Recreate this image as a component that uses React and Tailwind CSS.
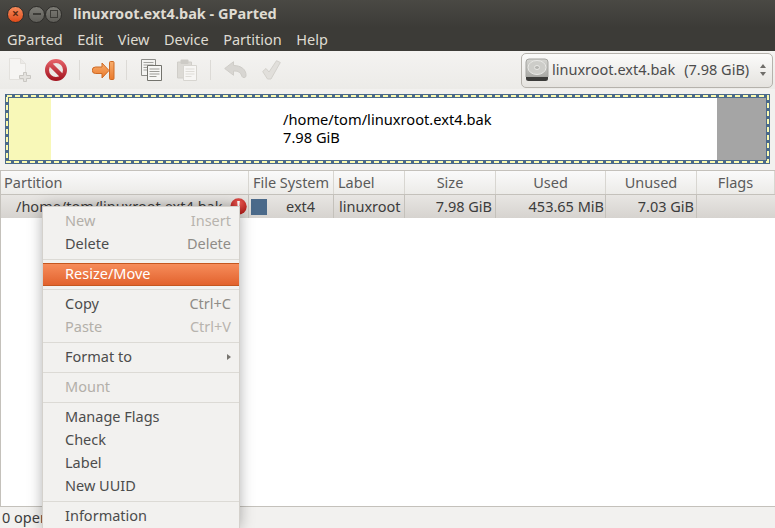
const FONT = "font-['Noto_Sans','Open_Sans',sans-serif]";

const columns = [
  { name: "Partition", className: "w-[248px] pl-[3px] text-left" },
  { name: "File System", className: "w-[85px] text-center" },
  { name: "Label", className: "w-[71px] pl-1 text-left" },
  { name: "Size", className: "w-[91px] text-center" },
  { name: "Used", className: "w-[110px] text-center" },
  { name: "Unused", className: "w-[91px] text-center" },
  { name: "Flags", className: "flex-1 text-center" },
];

const menuItems = [
  { label: "New", accel: "Insert", disabled: true },
  { label: "Delete", accel: "Delete" },
  { sep: true },
  { label: "Resize/Move", active: true },
  { sep: true },
  { label: "Copy", accel: "Ctrl+C" },
  { label: "Paste", accel: "Ctrl+V", disabled: true },
  { sep: true },
  { label: "Format to", submenu: true },
  { sep: true },
  { label: "Mount", disabled: true },
  { sep: true },
  { label: "Manage Flags" },
  { label: "Check" },
  { label: "Label" },
  { label: "New UUID" },
  { sep: true },
  { label: "Information" },
];

const WindowButton = ({ className, children }) => (
  <div className={`flex h-[17px] w-[17px] items-center justify-center rounded-full border border-[#2e2d2a] ${className}`}>
    {children}
  </div>
);

const Slot = ({ className = "w-[36px]", children }) => (
  <div className={`flex h-full items-center justify-center ${className}`}>{children}</div>
);

const Separator = ({ className }) => (
  <div className={`flex h-full items-center justify-center ${className}`}>
    <div className="h-[20px] w-px bg-[#dcdad6]" />
  </div>
);

const NewIcon = () => (
  <svg width="22" height="24" viewBox="0 0 22 24">
    <path d="M0.500 0.500h11l5 5v16h-16z" fill="#f6f5f3" stroke="#e3e1dd" />
    <path d="M11.500 0.500v5h5" fill="#eceae7" stroke="#e3e1dd" />
    <path d="M14.500 14.500h3v3h4v3h-4v3h-3v-3h-4v-3h4z" fill="#e4e2de" stroke="#c9c7c2" />
  </svg>
);

const StopIcon = () => (
  <svg width="22" height="23" viewBox="0 0 22 23">
    <defs>
      <linearGradient id="stop" x1="0" y1="0" x2="0" y2="22" gradientUnits="userSpaceOnUse">
        <stop offset="0" stopColor="#e8666c" />
        <stop offset="1" stopColor="#a0101c" />
      </linearGradient>
    </defs>
    <circle cx="11" cy="11" r="9" fill="#ece9e6" stroke="url(#stop)" strokeWidth="4" />
    <path d="M4.500 4.500l13 13" stroke="url(#stop)" strokeWidth="4.500" />
  </svg>
);

const ResizeIcon = () => (
  <svg width="23" height="19" viewBox="0 0 23 19">
    <defs>
      <linearGradient id="resize" x1="0" y1="0" x2="0" y2="1">
        <stop offset="0" stopColor="#f7ad6d" />
        <stop offset="1" stopColor="#ea7a2c" />
      </linearGradient>
    </defs>
    <path d="M3.500 6H10V2l7 7.500-7 7.500v-4.500H3.500a3.200 3.200 0 0 1 0-6.500z" fill="url(#resize)" stroke="#cf6a24" strokeLinejoin="round" />
    <rect x="17.500" y="0.500" width="4.500" height="18" rx="1" fill="url(#resize)" stroke="#cf6a24" />
  </svg>
);

const CopyIcon = () => (
  <svg width="21" height="22" viewBox="0 0 21 22">
    <path d="M0.500 0.500h14v16h-14z" fill="#f4f4f2" stroke="#8d8d89" />
    <path d="M2.500 3.500h10M2.500 6h10M2.500 8.500h10M2.500 11h8" stroke="#a2a29e" />
    <path d="M6.500 6.500h14v15h-14z" fill="#f7f7f5" stroke="#73736d" />
    <path d="M8.500 10h10M8.500 12.500h10M8.500 15h10M8.500 17.500h7" stroke="#9b9b96" />
  </svg>
);

const PasteIcon = () => (
  <svg width="20" height="22" viewBox="0 0 20 22">
    <path d="M0.500 3h14v16h-14z" fill="#dcdad5" stroke="#d0cec9" />
    <rect x="3.500" y="0.500" width="8" height="4.500" rx="1" fill="#cdcbc6" />
    <path d="M6.500 6.500h13v15h-13z" fill="#f7f6f4" stroke="#d7d5d0" />
    <path d="M8.500 10h9M8.500 12.500h9M8.500 15h9M8.500 17.500h6" stroke="#dedcd7" />
  </svg>
);

const UndoIcon = () => (
  <svg width="23" height="18" viewBox="0 0 23 18">
    <path d="M9.500 0.700L0.700 7.500l8.800 6.800V10c4.500 0 7 1 8.500 5.500.5 1.500 3.800 1.500 4-.5C22.500 8.500 17 4.500 9.500 4.500z" fill="#d8d6d2" stroke="#cfcdc8" strokeLinejoin="round" />
  </svg>
);

const ApplyIcon = () => (
  <svg width="19" height="20" viewBox="0 0 19 20">
    <path d="M0.700 11.500L4 8.500l3 3.500L14.500 0.700l3.800 1.800L9 19H5.500z" fill="#e1dfdb" stroke="#d2d0cb" strokeLinejoin="round" />
  </svg>
);

const DiskIcon = () => (
  <svg width="24" height="24" viewBox="0 0 24 24">
    <defs>
      <linearGradient id="disk" x1="0" y1="0" x2="0" y2="1">
        <stop offset="0" stopColor="#d6d6d2" />
        <stop offset="1" stopColor="#a8a8a4" />
      </linearGradient>
    </defs>
    <path d="M4 1h16a3 3 0 0 1 3 3v15H1V4a3 3 0 0 1 3-3z" fill="url(#disk)" stroke="#a5a5a1" />
    <ellipse cx="12" cy="9.500" rx="9" ry="7" fill="#cdcdc9" stroke="#e9e9e6" />
    <ellipse cx="12" cy="9.500" rx="2.500" ry="2" fill="#b5b5b1" stroke="#e9e9e6" />
    <path d="M1 19h22v1.500a2.500 2.500 0 0 1-2.500 2.500h-17A2.500 2.500 0 0 1 1 20.500z" fill="#3b3b39" />
  </svg>
);

const WarningIcon = () => (
  <svg width="17" height="17" viewBox="0 0 17 17">
    <defs>
      <radialGradient id="warn" cx="0.5" cy="0.3" r="0.8">
        <stop offset="0" stopColor="#ef5c56" />
        <stop offset="1" stopColor="#a8100e" />
      </radialGradient>
    </defs>
    <circle cx="8.500" cy="8.500" r="8.200" fill="url(#warn)" />
    <path d="M7.200 3h2.600l-.5 7H7.700z" fill="#fff" />
    <circle cx="8.500" cy="12.500" r="1.400" fill="#fff" />
  </svg>
);

const ContextMenu = () => (
  <div className="absolute left-[43px] top-[207px] w-[196px] bg-[#f2f1ef] pt-[2.500px] shadow-[0_0_14px_rgba(0,0,0,0.35)] outline outline-1 outline-[#d4d1cc]">
    {menuItems.map((item, i) => {
      if (item.sep) {
        return (
          <div key={i} className="flex h-[7px] items-center">
            <div className="h-px w-full bg-[#dcdad5]" />
          </div>
        );
      }
      let rowColor = "text-[#4c4c4c]";
      if (item.disabled) rowColor = "text-[#b3afa9]";
      if (item.active) {
        rowColor = "-mx-px border border-[#c4561f] bg-gradient-to-b from-[#f68c5a] to-[#e2622c] text-white";
      }
      return (
        <div key={i} className={`flex h-[23px] items-center justify-between pl-[22px] pr-[8px] text-[14.500px] ${rowColor}`}>
          <span>{item.label}</span>
          {item.accel && (
            <span className={item.disabled ? "text-[#b8b4ae]" : "text-[#8f8c87]"}>{item.accel}</span>
          )}
          {item.submenu && <span className="h-0 w-0 border-y-[3px] border-l-[4px] border-y-transparent border-l-[#77746f]" />}
        </div>
      );
    })}
  </div>
);

const App = () => {
  return (
    <div className={`relative flex h-[528px] w-[775px] flex-col overflow-hidden bg-[#f2f1ef] text-[14.500px] text-[#3c3c3c] ${FONT}`}>
      {/* Barre de titre */}
      <div className="flex h-[28px] items-center bg-gradient-to-b from-[#4a4944] to-[#3c3b37] pl-[7px] text-[#dfdbd2]">
        <div className="flex w-[66px] items-center">
          <WindowButton className="bg-gradient-to-b from-[#f58a5a] to-[#df4a16]">
            <span className="text-[12px] font-bold leading-none text-[#5a2a14]">×</span>
          </WindowButton>
          <WindowButton className="ml-[4px] bg-gradient-to-b from-[#7d7c76] to-[#5e5d58]">
            <span className="h-[2px] w-[8px] bg-[#3c3b37]" />
          </WindowButton>
          <WindowButton className="bg-gradient-to-b from-[#7d7c76] to-[#5e5d58]">
            <span className="h-[8px] w-[8px] border border-[#3c3b37]" />
          </WindowButton>
        </div>
        <span className="text-[14.500px] font-bold">linuxroot.ext4.bak - GParted</span>
      </div>

      {/* Menu */}
      <div className="flex h-[23px] items-center gap-[14.500px] bg-[#3c3b37] pl-[7px] text-[#dfdbd2]">
        <span>GParted</span>
        <span>Edit</span>
        <span>View</span>
        <span>Device</span>
        <span>Partition</span>
        <span>Help</span>
      </div>

      {/* Barre d'outils */}
      <div className="flex h-[38px] items-center bg-gradient-to-b from-[#f4f3f1] to-[#ecebe8] pl-[2px] pr-[2px]">
        <Slot><NewIcon /></Slot>
        <Slot className="w-[35px]"><StopIcon /></Slot>
        <Separator className="w-[12px]" />
        <Slot><ResizeIcon /></Slot>
        <Separator className="w-[11px]" />
        <Slot className="ml-px w-[36px]"><CopyIcon /></Slot>
        <Slot><PasteIcon /></Slot>
        <Separator className="w-[11px]" />
        <Slot className="ml-px w-[36px]"><UndoIcon /></Slot>
        <Slot><ApplyIcon /></Slot>
        <div className="ml-auto flex h-[35px] w-[252px] items-center rounded-[5px] border border-[#b5b2ac] bg-gradient-to-b from-[#fbfbfa] to-[#e5e3df] pl-[3px] pr-[6px]">
          <DiskIcon />
          <span className="ml-[3px] text-[#4c4c4c]">linuxroot.ext4.bak</span>
          <span className="ml-[9px] text-[#4c4c4c]">(7.98 GiB)</span>
          <div className="ml-auto flex flex-col gap-[4px]">
            <span className="h-0 w-0 border-x-[3.500px] border-b-[4px] border-x-transparent border-b-[#6f6d69]" />
            <span className="h-0 w-0 border-x-[3.500px] border-t-[4px] border-x-transparent border-t-[#6f6d69]" />
          </div>
        </div>
      </div>

      {/* Représentation graphique de la partition */}
      <div className="px-[5px] pt-[5px]">
        <div className="relative h-[70px] w-[765px] bg-[#4b6a8a] p-[4px]">
          <div className="flex h-full">
            <div className="w-[42px] bg-[#f8f8b8]" />
            <div className="flex flex-1 flex-col justify-center bg-white pb-[2px] pl-[232px] text-[14.670px] leading-[18px] text-black">
              <span>/home/tom/linuxroot.ext4.bak</span>
              <span>7.98 GiB</span>
            </div>
            <div className="w-[49px] bg-[#a5a5a5]" />
          </div>
          <svg width="765" height="70" className="absolute left-0 top-0">
            <rect x="2" y="2" width="761" height="66" fill="none" stroke="#fbfab0" strokeWidth="2" strokeDasharray="5 3" />
          </svg>
        </div>
      </div>

      {/* Liste des partitions */}
      <div className="mt-[6px] flex flex-1 flex-col border-y border-l border-[#c4c1bb] bg-white">
        <div className="flex h-[24px] border-b border-[#c4c1bb] bg-gradient-to-b from-[#fafafa] to-[#ecebe8] text-[#5b5b5b]">
          {columns.map((col) => (
            <div key={col.name} className={`truncate border-r border-[#d8d6d1] leading-[23px] ${col.className}`}>
              {col.name}
            </div>
          ))}
        </div>
        <div className="flex h-[23px] items-center bg-gradient-to-b from-[#e8e6e3] to-[#d6d3cf] leading-[23px] text-[#3c3c3c]">
          <div className="flex w-[248px] items-center justify-between border-r border-[#c4c1bb] pl-[15px] pr-px">
            <span>/home/tom/linuxroot.ext4.bak</span>
            <WarningIcon />
          </div>
          <div className="flex w-[85px] items-center border-r border-[#c4c1bb] pl-[2px]">
            <div className="h-[16px] w-[16px] bg-[#4b6a8a]" />
            <span className="ml-[19px]">ext4</span>
          </div>
          <div className="w-[71px] border-r border-[#c4c1bb] pl-[5px]">linuxroot</div>
          <div className="w-[91px] border-r border-[#c4c1bb] pr-[3px] text-right">7.98 GiB</div>
          <div className="w-[110px] border-r border-[#c4c1bb] pr-[1px] text-right">453.65 MiB</div>
          <div className="w-[91px] border-r border-[#c4c1bb] pr-[2px] text-right">7.03 GiB</div>
          <div className="flex-1" />
        </div>
      </div>

      {/* Barre d'état */}
      <div className="flex h-[21px] items-center bg-[#f2f1ef] pl-[2px]">0 operations pending</div>

      <ContextMenu />
    </div>
  );
};

export default App;
